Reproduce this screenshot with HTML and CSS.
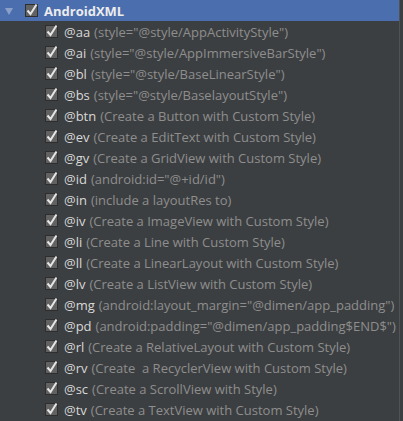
FILE: index.html
```html
<!DOCTYPE html>
<html>
<head>
<meta charset="utf-8">
<link rel="stylesheet" href="styles.css">
</head>
<body>
<div class="tree">
  <div class="row header">
    <span class="arrow"></span>
    <span class="cb"><svg viewBox="0 0 13 13" width="13" height="13"><path d="M2.5 6.5 L5.5 10 L11.5 0.5" fill="none" stroke="#e6e6e6" stroke-width="2"/></svg></span>
    <span class="title">AndroidXML</span>
  </div>
  <div class="row item"><span class="cb"><svg viewBox="0 0 13 13" width="13" height="13"><path d="M2.5 6.5 L5.5 10 L11.5 0.5" fill="none" stroke="#e6e6e6" stroke-width="2"/></svg></span><span class="key">@aa</span><span class="desc">(style="@style/AppActivityStyle")</span></div>
  <div class="row item"><span class="cb"><svg viewBox="0 0 13 13" width="13" height="13"><path d="M2.5 6.5 L5.5 10 L11.5 0.5" fill="none" stroke="#e6e6e6" stroke-width="2"/></svg></span><span class="key">@ai</span><span class="desc">(style="@style/AppImmersiveBarStyle")</span></div>
  <div class="row item"><span class="cb"><svg viewBox="0 0 13 13" width="13" height="13"><path d="M2.5 6.5 L5.5 10 L11.5 0.5" fill="none" stroke="#e6e6e6" stroke-width="2"/></svg></span><span class="key">@bl</span><span class="desc">(style="@style/BaseLinearStyle")</span></div>
  <div class="row item"><span class="cb"><svg viewBox="0 0 13 13" width="13" height="13"><path d="M2.5 6.5 L5.5 10 L11.5 0.5" fill="none" stroke="#e6e6e6" stroke-width="2"/></svg></span><span class="key">@bs</span><span class="desc">(style="@style/BaselayoutStyle")</span></div>
  <div class="row item"><span class="cb"><svg viewBox="0 0 13 13" width="13" height="13"><path d="M2.5 6.5 L5.5 10 L11.5 0.5" fill="none" stroke="#e6e6e6" stroke-width="2"/></svg></span><span class="key">@btn</span><span class="desc">(Create a Button with Custom Style)</span></div>
  <div class="row item"><span class="cb"><svg viewBox="0 0 13 13" width="13" height="13"><path d="M2.5 6.5 L5.5 10 L11.5 0.5" fill="none" stroke="#e6e6e6" stroke-width="2"/></svg></span><span class="key">@ev</span><span class="desc">(Create a EditText with Custom Style)</span></div>
  <div class="row item"><span class="cb"><svg viewBox="0 0 13 13" width="13" height="13"><path d="M2.5 6.5 L5.5 10 L11.5 0.5" fill="none" stroke="#e6e6e6" stroke-width="2"/></svg></span><span class="key">@gv</span><span class="desc">(Create a GridView with Custom Style)</span></div>
  <div class="row item"><span class="cb"><svg viewBox="0 0 13 13" width="13" height="13"><path d="M2.5 6.5 L5.5 10 L11.5 0.5" fill="none" stroke="#e6e6e6" stroke-width="2"/></svg></span><span class="key">@id</span><span class="desc">(android:id="@+id/id")</span></div>
  <div class="row item"><span class="cb"><svg viewBox="0 0 13 13" width="13" height="13"><path d="M2.5 6.5 L5.5 10 L11.5 0.5" fill="none" stroke="#e6e6e6" stroke-width="2"/></svg></span><span class="key">@in</span><span class="desc">(include a layoutRes to)</span></div>
  <div class="row item"><span class="cb"><svg viewBox="0 0 13 13" width="13" height="13"><path d="M2.5 6.5 L5.5 10 L11.5 0.5" fill="none" stroke="#e6e6e6" stroke-width="2"/></svg></span><span class="key">@iv</span><span class="desc">(Create a ImageView with Custom Style)</span></div>
  <div class="row item"><span class="cb"><svg viewBox="0 0 13 13" width="13" height="13"><path d="M2.5 6.5 L5.5 10 L11.5 0.5" fill="none" stroke="#e6e6e6" stroke-width="2"/></svg></span><span class="key">@li</span><span class="desc">(Create a Line with Custom Style)</span></div>
  <div class="row item"><span class="cb"><svg viewBox="0 0 13 13" width="13" height="13"><path d="M2.5 6.5 L5.5 10 L11.5 0.5" fill="none" stroke="#e6e6e6" stroke-width="2"/></svg></span><span class="key">@ll</span><span class="desc">(Create a LinearLayout with Custom Style)</span></div>
  <div class="row item"><span class="cb"><svg viewBox="0 0 13 13" width="13" height="13"><path d="M2.5 6.5 L5.5 10 L11.5 0.5" fill="none" stroke="#e6e6e6" stroke-width="2"/></svg></span><span class="key">@lv</span><span class="desc">(Create a ListView with Custom Style)</span></div>
  <div class="row item"><span class="cb"><svg viewBox="0 0 13 13" width="13" height="13"><path d="M2.5 6.5 L5.5 10 L11.5 0.5" fill="none" stroke="#e6e6e6" stroke-width="2"/></svg></span><span class="key">@mg</span><span class="desc">(android:layout_margin="@dimen/app_padding")</span></div>
  <div class="row item"><span class="cb"><svg viewBox="0 0 13 13" width="13" height="13"><path d="M2.5 6.5 L5.5 10 L11.5 0.5" fill="none" stroke="#e6e6e6" stroke-width="2"/></svg></span><span class="key">@pd</span><span class="desc">(android:padding="@dimen/app_padding$END$")</span></div>
  <div class="row item"><span class="cb"><svg viewBox="0 0 13 13" width="13" height="13"><path d="M2.5 6.5 L5.5 10 L11.5 0.5" fill="none" stroke="#e6e6e6" stroke-width="2"/></svg></span><span class="key">@rl</span><span class="desc">(Create a RelativeLayout with Custom Style)</span></div>
  <div class="row item"><span class="cb"><svg viewBox="0 0 13 13" width="13" height="13"><path d="M2.5 6.5 L5.5 10 L11.5 0.5" fill="none" stroke="#e6e6e6" stroke-width="2"/></svg></span><span class="key">@rv</span><span class="desc">(Create &nbsp;a RecyclerView with Custom Style)</span></div>
  <div class="row item"><span class="cb"><svg viewBox="0 0 13 13" width="13" height="13"><path d="M2.5 6.5 L5.5 10 L11.5 0.5" fill="none" stroke="#e6e6e6" stroke-width="2"/></svg></span><span class="key">@sc</span><span class="desc">(Create a ScrollView with Style)</span></div>
  <div class="row item"><span class="cb"><svg viewBox="0 0 13 13" width="13" height="13"><path d="M2.5 6.5 L5.5 10 L11.5 0.5" fill="none" stroke="#e6e6e6" stroke-width="2"/></svg></span><span class="key">@tv</span><span class="desc">(Create a TextView with Custom Style)</span></div>
</div>
</body>
</html>
```
FILE: styles.css
```css
html, body {
  margin: 0;
  padding: 0;
  background: #3c3f41;
  width: 403px;
  height: 421px;
  overflow: hidden;
}
.tree {
  font-family: "Open Sans", "Noto Sans CJK SC", sans-serif;
  font-size: 13px;
  border-right: 1px solid #505355;
  width: 400px;
  height: 421px;
  box-sizing: border-box;
}
.row {
  height: 21px;
  display: flex;
  align-items: center;
  white-space: nowrap;
}
.header {
  background: #4b6eaf;
  padding-left: 5px;
}
.arrow {
  width: 0;
  height: 0;
  border-left: 4px solid transparent;
  border-right: 4px solid transparent;
  border-top: 7px solid #8aa0c8;
  margin-right: 12px;
  margin-top: 1px;
}
.cb {
  position: relative;
  width: 13px;
  height: 13px;
  background: #626262;
  border: 1px solid #2e2e2e;
  box-sizing: border-box;
  margin-right: 6px;
  flex: none;
}
.cb svg {
  position: absolute;
  left: -1px;
  top: -1px;
  overflow: visible;
}
.title {
  color: #ececec;
  font-weight: bold;
  font-size: 13px;
}
.item {
  padding-left: 45px;
}
.key {
  color: #d8d8d8;
  margin-right: 4px;
}
.desc {
  color: #8e8e8e;
}
```
